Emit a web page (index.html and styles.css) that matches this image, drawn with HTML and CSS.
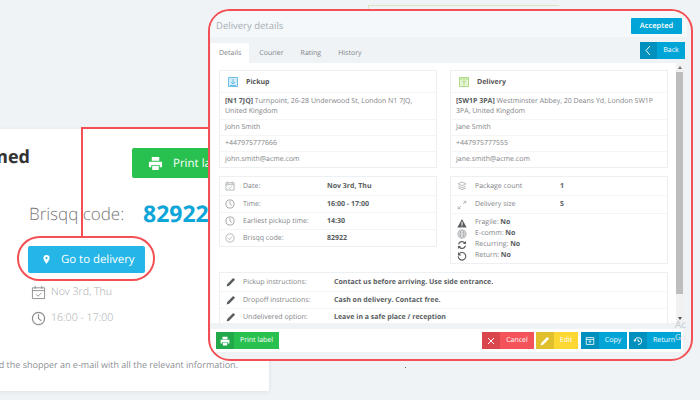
FILE: index.html
```html
<!DOCTYPE html>
<html lang="en">
<head>
    <meta charset="UTF-8">
    <title>Delivery details</title>
    <link rel="stylesheet" href="styles.css">
</head>
<body>
    <svg class="defs" width="0" height="0">
        <symbol id="i-print" viewBox="0 0 16 16"><path fill="currentColor" d="M4 1h8v4H4zM1 6h14v6h-2.500v-2.500h-9V12H1zM4.500 10.500h7V15h-7z"/></symbol>
        <symbol id="i-cal" viewBox="0 0 16 16"><path fill="none" stroke="currentColor" d="M1.500 3h13v11.500h-13zM1.500 6h13M4.500 1v3M11.500 1v3M5.500 10l2 2 3.500-3.500"/></symbol>
        <symbol id="i-clock" viewBox="0 0 16 16"><circle cx="8" cy="8" r="6.500" fill="none" stroke="currentColor" stroke-width="1.300"/><path fill="none" stroke="currentColor" stroke-width="1.200" d="M8 3.500V8l3 2.500"/></symbol>
        <symbol id="i-check" viewBox="0 0 16 16"><circle cx="8" cy="8" r="6.500" fill="none" stroke="currentColor"/><path fill="none" stroke="currentColor" d="M5 8.500l2 2 4-4.500"/></symbol>
        <symbol id="i-stack" viewBox="0 0 16 16"><path fill="none" stroke="currentColor" d="M8 1.500l6 3-6 3-6-3zM2 8l6 3 6-3M2 11l6 3 6-3"/></symbol>
        <symbol id="i-size" viewBox="0 0 16 16"><path fill="none" stroke="currentColor" d="M2 14l4.500-4.500M2 10.500V14h3.500M14 2L9.500 6.500M10.500 2H14v3.500"/></symbol>
        <symbol id="i-warn" viewBox="0 0 16 16"><path fill="currentColor" d="M8 1.500L15.500 15H.5zM7.200 6v5h1.600V6zM7.200 12v1.500h1.600V12z" fill-rule="evenodd"/></symbol>
        <symbol id="i-globe" viewBox="0 0 16 16"><g fill="none" stroke="currentColor"><circle cx="8" cy="8" r="6.500"/><ellipse cx="8" cy="8" rx="3" ry="6.500"/><path d="M1.500 8h13M2.500 5h11M2.500 11h11"/></g></symbol>
        <symbol id="i-sync" viewBox="0 0 16 16"><path fill="none" stroke="currentColor" stroke-width="2" d="M2.500 7a5.500 5.500 0 0 1 10-2M13.500 9a5.500 5.500 0 0 1-10 2"/><path fill="currentColor" d="M14.500 1.500v5h-5zM1.500 14.500v-5h5z"/></symbol>
        <symbol id="i-undo" viewBox="0 0 16 16"><path fill="none" stroke="currentColor" stroke-width="1.800" d="M3.500 4.500a6 6 0 1 1-1.500 4"/><path fill="currentColor" d="M1.500 1.500v5.500H7z"/></symbol>
        <symbol id="i-pencil" viewBox="0 0 16 16"><path fill="currentColor" d="M11.500 1.500l3 3-9.500 9.500-4 1 1-4z"/></symbol>
        <symbol id="i-pin" viewBox="0 0 16 16"><path fill="currentColor" fill-rule="evenodd" d="M8 0a5.500 5.500 0 0 1 5.500 5.500C13.500 9 8 16 8 16S2.500 9 2.500 5.500A5.500 5.500 0 0 1 8 0zm0 3.500a2 2 0 1 0 0 4 2 2 0 0 0 0-4z"/></symbol>
        <symbol id="i-copy" viewBox="0 0 16 16"><path fill="none" stroke="currentColor" stroke-width="1.300" d="M2 2.500h12v11H2zM2 5.500h12M8 7.500v4M6 9.500l2-2 2 2"/></symbol>
        <symbol id="i-return" viewBox="0 0 16 16"><path fill="none" stroke="currentColor" stroke-width="1.500" d="M3 7a5.500 5.500 0 1 1 5 6.500M8 5v3.500h3"/><path fill="currentColor" d="M.5 6h5L3 9.500z"/></symbol>
    </svg>

    <div class="green-box"></div>
    <div class="green-tick"></div>

    <section class="shop-card">
        <div class="shop-head">
            <h2 class="shop-title">Delivery confirmed</h2>
            <a class="shop-print"><svg class="ic-print"><use href="#i-print"/></svg>Print label</a>
        </div>
        <div class="shop-code"><span class="shop-code-label">Brisqq code:</span><strong class="shop-code-value">82922</strong></div>
        <a class="shop-go"><svg class="ic-pin"><use href="#i-pin"/></svg>Go to delivery</a>
        <div class="shop-line shop-date"><svg class="ic-line"><use href="#i-cal"/></svg>Nov 3rd, Thu</div>
        <div class="shop-line shop-time"><svg class="ic-line"><use href="#i-clock"/></svg>16:00 - 17:00</div>
        <p class="shop-note">We will send the shopper an e-mail with all the relevant information.</p>
    </section>

    <div class="connector"></div>
    <div class="pill-mark"></div>
    <div class="dot"></div>

    <main class="window">
        <header class="win-head">
            <h1 class="win-title">Delivery details</h1>
            <span class="status">Accepted</span>
        </header>
        <nav class="tabs">
            <a class="tab active">Details</a>
            <a class="tab">Courier</a>
            <a class="tab">Rating</a>
            <a class="tab">History</a>
            <a class="back"><span class="back-ic"><svg width="9" height="11" viewBox="0 0 9 11"><path fill="none" stroke="currentColor" d="M6 1L2 5.500 6 10"/></svg></span><span class="back-text">Back</span></a>
        </nav>
        <div class="body">
            <div class="content">
                <div class="card">
                    <div class="card-head">
                        <svg class="ic-box" width="10" height="10" viewBox="0 0 10 10"><rect width="10" height="10" fill="#d3ecf9"/><path fill="none" stroke="#6fbfe6" d="M.5.5h9v9h-9zM5 2v4.500M3 5l2 2 2-2M2 8.500h6"/></svg>
                        <span>Pickup</span>
                    </div>
                    <div class="row addr"><b>[N1 7JQ]</b> Turnpoint, 26-28 Underwood St, London N1 7JQ, United Kingdom</div>
                    <div class="row line">John Smith</div>
                    <div class="row line">+447975777666</div>
                    <div class="row line">john.smith@acme.com</div>
                </div>
                <div class="card">
                    <div class="card-head">
                        <svg class="ic-box" width="10" height="10" viewBox="0 0 10 10"><rect width="10" height="10" fill="#e6f5d8"/><path fill="none" stroke="#aedb82" d="M.5.5h9v9h-9zM.5 2h9M5 8V4M3 5.500l2-2 2 2"/></svg>
                        <span>Delivery</span>
                    </div>
                    <div class="row addr"><b>[SW1P 3PA]</b> Westminster Abbey, 20 Deans Yd, London SW1P 3PA, United Kingdom</div>
                    <div class="row line">Jane Smith</div>
                    <div class="row line">+447975777555</div>
                    <div class="row line">jane.smith@acme.com</div>
                </div>
                <div class="card">
                    <div class="row info"><svg class="ic"><use href="#i-cal"/></svg><span class="lbl">Date:</span><b>Nov 3rd, Thu</b></div>
                    <div class="row info"><svg class="ic"><use href="#i-clock"/></svg><span class="lbl">Time:</span><b>16:00 - 17:00</b></div>
                    <div class="row info"><svg class="ic"><use href="#i-clock"/></svg><span class="lbl">Earliest pickup time:</span><b>14:30</b></div>
                    <div class="row info"><svg class="ic"><use href="#i-check"/></svg><span class="lbl">Brisqq code:</span><b>82922</b></div>
                </div>
                <div class="card card-pack">
                    <div class="row info"><svg class="ic"><use href="#i-stack"/></svg><span class="lbl">Package count</span><b>1</b></div>
                    <div class="row info"><svg class="ic"><use href="#i-size"/></svg><span class="lbl">Delivery size</span><b>S</b></div>
                    <div class="row flags">
                        <div class="flag"><svg class="ic dark"><use href="#i-warn"/></svg>Fragile:&nbsp;<b>No</b></div>
                        <div class="flag"><svg class="ic"><use href="#i-globe"/></svg>E-comm:&nbsp;<b>No</b></div>
                        <div class="flag"><svg class="ic dark"><use href="#i-sync"/></svg>Recurring:&nbsp;<b>No</b></div>
                        <div class="flag"><svg class="ic dark"><use href="#i-undo"/></svg>Return:&nbsp;<b>No</b></div>
                    </div>
                </div>
                <div class="card card-wide">
                    <div class="row note"><svg class="ic dark"><use href="#i-pencil"/></svg><span class="lbl">Pickup instructions:</span><b>Contact us before arriving. Use side entrance.</b></div>
                    <div class="row note"><svg class="ic dark"><use href="#i-pencil"/></svg><span class="lbl">Dropoff instructions:</span><b>Cash on delivery. Contact free.</b></div>
                    <div class="row note"><svg class="ic dark"><use href="#i-pencil"/></svg><span class="lbl">Undelivered option:</span><b>Leave in a safe place / reception</b></div>
                </div>
            </div>
            <div class="scrollbar">
                <span class="arrow-up"></span>
                <span class="thumb"></span>
                <span class="arrow-down"></span>
            </div>
        </div>
        <footer class="foot">
            <a class="btn green btn-print"><span class="btn-ic"><svg width="10" height="10"><use href="#i-print"/></svg></span><span class="btn-text">Print label</span></a>
            <div class="foot-right">
                <a class="btn red btn-cancel"><span class="btn-ic"><svg width="8" height="8" viewBox="0 0 8 8"><path fill="none" stroke="currentColor" d="M1 1l6 6M7 1L1 7"/></svg></span><span class="btn-text">Cancel</span></a>
                <a class="btn yellow btn-edit"><span class="btn-ic"><svg width="10" height="10"><use href="#i-pencil"/></svg></span><span class="btn-text">Edit</span></a>
                <a class="btn blue btn-copy"><span class="btn-ic"><svg width="10" height="10"><use href="#i-copy"/></svg></span><span class="btn-text">Copy</span></a>
                <a class="btn blue btn-return"><span class="btn-ic"><svg width="10" height="10"><use href="#i-return"/></svg></span><span class="btn-text">Return</span></a>
            </div>
        </footer>
    </main>

    <div class="watermark">Ac<br><small>Go</small></div>
</body>
</html>
```

FILE: styles.css
```css
html, body {
    margin: 0;
    height: 100%;
}
body {
    width: 700px;
    height: 400px;
    overflow: hidden;
    position: relative;
    background: #eff3f6;
    font-family: "Open Sans", "Liberation Sans", sans-serif;
    font-size: 7px;
    color: #7f8488;
    text-rendering: geometricPrecision;
}
.defs {
    position: absolute;
}
svg {
    display: block;
    flex: none;
}

/* page behind the dialog */
.green-box {
    position: absolute;
    left: 368px;
    top: 5px;
    width: 190px;
    height: 7px;
    border-top: 1px solid #d5e6c0;
    border-left: 1px solid #d5e6c0;
}
.green-tick {
    position: absolute;
    left: 480px;
    top: 12px;
    width: 42px;
    height: 1px;
    background: #d5e6c0;
}
.shop-card {
    position: absolute;
    left: -200px;
    top: 129px;
    width: 469px;
    height: 262px;
    overflow: hidden;
    background: #fff;
    box-shadow: 0 1px 5px rgba(0, 0, 0, 0.07);
}
.shop-head {
    display: flex;
    align-items: flex-start;
    padding-top: 19px;
}
.shop-title {
    margin: -2px 0 0;
    width: 230px;
    flex: none;
    text-align: right;
    white-space: nowrap;
    font-size: 18px;
    line-height: 22px;
    font-weight: 700;
    color: #333;
}
.shop-print {
    margin-left: 102px;
    width: 137px;
    height: 30px;
    flex: none;
    display: flex;
    align-items: center;
    padding-left: 16px;
    box-sizing: border-box;
    gap: 10px;
    background: #28c04f;
    border-radius: 2px;
    color: #fff;
    font-size: 11.500px;
}
.ic-print {
    width: 15px;
    height: 15px;
}
.shop-code {
    display: flex;
    align-items: center;
    height: 30px;
    margin: 20px 0 0 229px;
}
.shop-code-label {
    width: 114px;
    font-size: 17px;
    font-weight: 300;
    color: #777;
}
.shop-code-value {
    font-size: 23px;
    font-weight: 700;
    color: #0ea5d8;
}
.shop-go {
    display: flex;
    align-items: center;
    gap: 10px;
    box-sizing: border-box;
    width: 117px;
    height: 27px;
    margin: 18px 0 0 228px;
    padding-left: 14px;
    background: #25b6e7;
    border-radius: 2px;
    color: #fff;
    font-size: 11.400px;
}
.ic-pin {
    width: 9px;
    height: 13px;
}
.shop-line {
    display: flex;
    align-items: center;
    gap: 5px;
    margin-left: 231px;
    height: 18px;
    font-size: 10.600px;
    font-weight: 300;
    color: #a5a8aa;
}
.shop-date {
    margin-top: 10px;
}
.shop-time {
    margin-top: 8px;
}
.ic-line {
    width: 15px;
    height: 15px;
    color: #8b8d8f;
}
.shop-note {
    margin: 31px 0 0;
    padding-right: 31px;
    text-align: right;
    white-space: nowrap;
    font-size: 9px;
    font-weight: 400;
    color: #8d9195;
}
.dot {
    position: absolute;
    left: 405px;
    top: 367px;
    width: 1px;
    height: 1px;
    background: #666;
}

/* red annotations */
.connector {
    position: absolute;
    left: 81px;
    top: 127px;
    width: 128px;
    height: 109px;
    border-top: 2px solid #f34f55;
    border-left: 2px solid #f34f55;
    box-sizing: border-box;
}
.pill-mark {
    position: absolute;
    left: 17px;
    top: 236px;
    width: 138px;
    height: 45px;
    box-sizing: border-box;
    border: 2px solid #f34f55;
    border-radius: 23px;
}

/* dialog */
.window {
    position: absolute;
    left: 208px;
    top: 9px;
    width: 485px;
    height: 352px;
    box-sizing: border-box;
    border: 2px solid #f34f55;
    border-radius: 22px;
    overflow: hidden;
    background: #eff3f6;
}
.win-head {
    display: flex;
    align-items: center;
    justify-content: space-between;
    height: 26px;
    width: 477px;
    box-sizing: border-box;
    padding: 3px 5px 0 6px;
    background: #f4f8fa;
}
.win-title {
    margin: 0;
    font-size: 9.500px;
    font-weight: 400;
    color: #a9afb4;
}
.status {
    width: 51px;
    height: 16px;
    line-height: 16px;
    text-align: center;
    background: #00a5d8;
    border-radius: 1px;
    color: #fff;
    font-size: 7.500px;
    font-weight: 600;
}
.tabs {
    display: flex;
    align-items: flex-end;
    height: 26px;
    width: 474px;
    padding-left: 1px;
}
.tab {
    height: 20px;
    line-height: 22px;
    padding: 0 8px;
    color: #7f8488;
}
.tab + .tab {
    padding: 0 8.500px;
}
.tab.active {
    background: #fff;
    margin-right: 1.500px;
}
.back {
    display: flex;
    margin-left: auto;
    align-self: flex-start;
    margin-top: 5px;
    height: 17px;
    width: 45px;
    color: #fff;
}
.back-ic {
    width: 17px;
    background: #0090bd;
    display: flex;
    align-items: center;
    justify-content: center;
}
.back-text {
    flex: 1;
    line-height: 17px;
    text-align: center;
    background: #00a5d8;
}
.body {
    display: flex;
    width: 473px;
    height: 260px;
    margin-left: 1px;
    background: #fff;
    overflow: hidden;
}
.content {
    width: 447px;
    flex: none;
    padding: 8px 9px;
    display: grid;
    grid-template-columns: 216px 216px;
    column-gap: 15px;
    row-gap: 10px;
    align-items: start;
}
.card {
    box-shadow: 0 0 0 1px #edf0f2;
    background: #fff;
}
.card-wide {
    grid-column: 1 / span 2;
}
.card-head {
    display: flex;
    align-items: center;
    gap: 8px;
    height: 21px;
    box-sizing: border-box;
    padding: 1px 0 0 8px;
    font-weight: 700;
    color: #555;
}
.row {
    border-top: 1px solid #f3f5f6;
    box-sizing: border-box;
    padding-left: 5px;
}
.card > .row:first-child {
    border-top: 0;
}
.row b {
    color: #595d61;
    font-weight: 700;
}
.addr {
    height: 27px;
    padding: 4px 11px 0 5px;
    line-height: 10px;
}
.line {
    height: 16px;
    line-height: 15px;
}
.info, .note {
    display: flex;
    align-items: center;
    height: 17px;
}
.info:first-child, .note:first-child {
    height: 18px;
}
.ic {
    width: 10px;
    height: 10px;
    margin-right: 8px;
    color: #8f9295;
}
.ic.dark {
    color: #5b5e61;
}
.lbl {
    width: 84px;
    flex: none;
}
.card-pack .lbl {
    width: 85px;
}
.card-pack .info {
    height: 18px;
}
.card-pack .ic {
    margin-right: 8px;
    margin-left: 1px;
}
.flags {
    padding-top: 3px;
    height: 50px;
}
.flag {
    display: flex;
    align-items: center;
    height: 11px;
}
.note .ic {
    margin-left: 1px;
    margin-right: 7px;
}
.note .lbl {
    width: 91px;
}
.scrollbar {
    position: relative;
    width: 8px;
    background: #f1f1f1;
    flex: none;
}
.thumb {
    position: absolute;
    top: 9px;
    left: 0;
    width: 7px;
    height: 222px;
    background: #bdbdbd;
}
.arrow-up, .arrow-down {
    position: absolute;
    left: 2px;
    border-left: 2px solid transparent;
    border-right: 2px solid transparent;
}
.arrow-up {
    top: 3px;
    border-bottom: 3px solid #777;
}
.arrow-down {
    bottom: 3px;
    border-top: 3px solid #555;
}
.foot {
    display: flex;
    justify-content: space-between;
    align-items: center;
    width: 472px;
    height: 23px;
    margin: 6px 0 0 1px;
    box-sizing: border-box;
    padding: 0 2px 0 5px;
    background: #fff;
}
.foot-right {
    display: flex;
    gap: 2px;
}
.btn {
    display: flex;
    height: 17px;
    line-height: 17px;
    color: #fff;
}
.btn-ic {
    width: 18px;
    flex: none;
    display: flex;
    align-items: center;
    justify-content: center;
}
.btn-text {
    flex: 1;
    text-align: center;
}
.btn-print { width: 63px; }
.btn-cancel { width: 52px; }
.btn-edit { width: 42px; }
.btn-copy { width: 46px; margin-left: 1px; }
.btn-return { width: 52px; }
.green .btn-ic { background: #22a94a; }
.green .btn-text { background: #28c04f; }
.red .btn-ic { background: #d9464d; }
.red .btn-text { background: #f4535a; }
.yellow .btn-ic { background: #e0c02c; }
.yellow .btn-text { background: #fdd835; }
.blue .btn-ic { background: #0090bd; }
.blue .btn-text { background: #00a5d8; }
.watermark {
    position: absolute;
    left: 675px;
    top: 318px;
    font-size: 10px;
    line-height: 12px;
    color: #c4c9cc;
}
.watermark small {
    font-size: 8px;
    color: #e4e8ea;
}
```
